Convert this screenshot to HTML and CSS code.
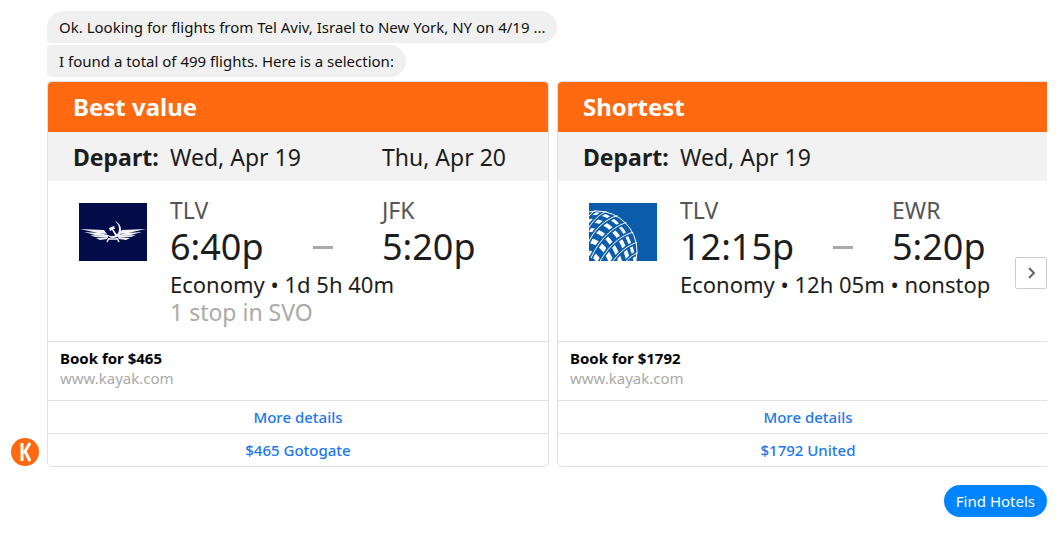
FILE: index.html
```html
<!DOCTYPE html>
<html lang="en">
<head>
    <meta charset="UTF-8">
    <meta name="viewport" content="width=device-width, initial-scale=1.0">
    <title>Kayak Flights Chat</title>
    <link rel="stylesheet" href="styles.css">
</head>
<body>
    <main class="chat">
        <div class="message-group">
            <svg class="avatar" viewBox="0 0 28 28" role="img" aria-label="Kayak">
                <circle cx="14" cy="14" r="14" fill="#ff690f"/>
                <path d="M11 5v18M19 5l-6 10M13.500 12.500L19 23" fill="none" stroke="#fff" stroke-width="3"/>
            </svg>
            <div class="messages">
                <p class="bubble first">Ok. Looking for flights from Tel Aviv, Israel to New York, NY on 4/19 ...</p>
                <p class="bubble">I found a total of 499 flights. Here is a selection:</p>
                <div class="carousel">
                    <div class="cards">
                        <article class="card">
                            <h2 class="card-title">Best value</h2>
                            <div class="depart">
                                <b>Depart:</b>
                                <span>Wed, Apr 19</span>
                                <span>Thu, Apr 20</span>
                            </div>
                            <div class="flight">
                                <svg class="airline" viewBox="0 0 68 58" role="img" aria-label="Aeroflot">
                                    <rect width="68" height="58" fill="#030b49"/>
                                    <g fill="#f2f4fa">
                                        <path d="M1 26l24 1 3 4-9-1zM5 29l15 1 9 2v1l-13-1zM11 32l18 1v1l-13 0zM17 35l12-1-1 2-7 1z"/>
                                        <path d="M67 26l-24 1-3 4 9-1zM63 29l-15 1-9 2v1l13-1zM57 32l-18 1v1l13 0zM51 35l-12-1 1 2 7 1z"/>
                                        <path d="M30 25l5-2 1 3-2 0 5 7-2 1-4-7-2 1z"/>
                                        <path d="M36 18c9 4 8 17-2 17-3 0-5-2-7-4 11 7 18-5 9-13z"/>
                                    </g>
                                    <path d="M28 39l2-4M40 39l-2-4M30 36h8" fill="none" stroke="#f2f4fa" stroke-width="1.500"/>
                                </svg>
                                <div class="details">
                                    <div class="airport">TLV</div>
                                    <div class="airport">JFK</div>
                                    <div class="time"><span>6:40p</span><i class="dash"></i></div>
                                    <div class="time">5:20p</div>
                                    <div class="info">Economy • 1d 5h 40m</div>
                                    <div class="stops">1 stop in SVO</div>
                                </div>
                            </div>
                            <div class="book">
                                <h3>Book for $465</h3>
                                <p>www.kayak.com</p>
                            </div>
                            <a class="action" href="#">More details</a>
                            <a class="action" href="#">$465 Gotogate</a>
                        </article>

                        <article class="card">
                            <h2 class="card-title">Shortest</h2>
                            <div class="depart">
                                <b>Depart:</b>
                                <span>Wed, Apr 19</span>
                            </div>
                            <div class="flight">
                                <svg class="airline" viewBox="0 0 68 58" role="img" aria-label="United">
                                    <defs>
                                        <clipPath id="globe"><circle cx="8" cy="48" r="41"/></clipPath>
                                        <path id="meridians" d="M-4 19C-1 13 4 8 10 5M-3 30C2 19 10 11 20 7M-2 43C4 27 16 16 30 12M2 55C10 37 24 23 39 19M9 62C19 43 32 32 45 29M21 62C30 49 39 42 49 39M34 62C40 54 45 51 51 49"/>
                                    </defs>
                                    <rect width="68" height="58" fill="#0b5cab"/>
                                    <g clip-path="url(#globe)" fill="none" stroke="#fff">
                                        <path stroke-width="3" d="M0 11C20 8 39 23 46 58"/>
                                        <path stroke-width="4" d="M0 18C16 16 35 31 40 62M0 27C13 26 27 41 32 62"/>
                                        <path stroke-width="5" d="M0 38C9 37 20 49 23 62M0 50C5 51 9 56 12 62"/>
                                        <use href="#meridians" stroke="#0b5cab" stroke-width="4"/>
                                        <use href="#meridians" stroke-width="1"/>
                                        <circle cx="8" cy="48" r="40"/>
                                    </g>
                                </svg>
                                <div class="details">
                                    <div class="airport">TLV</div>
                                    <div class="airport">EWR</div>
                                    <div class="time"><span>12:15p</span><i class="dash"></i></div>
                                    <div class="time">5:20p</div>
                                    <div class="info">Economy • 12h 05m • nonstop</div>
                                </div>
                            </div>
                            <div class="book">
                                <h3>Book for $1792</h3>
                                <p>www.kayak.com</p>
                            </div>
                            <a class="action" href="#">More details</a>
                            <a class="action" href="#">$1792 United</a>
                        </article>
                    </div>
                    <button class="next" type="button" aria-label="Next">
                        <svg viewBox="0 0 10 14"><path d="M3 2l5 5-5 5" fill="none" stroke="#64646e" stroke-width="2"/></svg>
                    </button>
                </div>
            </div>
        </div>
        <button class="quick-reply" type="button">Find Hotels</button>
    </main>
</body>
</html>
```
FILE: styles.css
```css
* {
    box-sizing: border-box;
}
body {
    background: #fff;
    color: #1d1d1d;
    font-family: "Noto Sans", "Segoe UI", sans-serif;
    font-size: 15px;
    line-height: 20px;
    margin: 0;
}
h2, h3, p {
    margin: 0;
}
.chat {
    display: flex;
    flex-direction: column;
    padding: 11px 17px 16px 11px;
}
.message-group {
    display: flex;
    align-items: flex-end;
    gap: 8px;
}
.avatar {
    width: 28px;
    height: 28px;
    flex: none;
    margin-bottom: 1px;
}
.messages {
    flex: 1;
    min-width: 0;
    display: flex;
    flex-direction: column;
    align-items: flex-start;
    gap: 2px;
}
.bubble {
    background: #f1f0f0;
    border-radius: 4px 16px 16px 4px;
    color: #111;
    padding: 6px 12px;
}
.bubble.first {
    border-top-left-radius: 16px;
}

/* Flight cards */
.carousel {
    position: relative;
    width: 100%;
    margin-top: 2px;
}
.cards {
    display: flex;
    gap: 8px;
    overflow: hidden;
}
.card {
    flex: 0 0 502px;
    display: flex;
    flex-direction: column;
    border: 1px solid #e1e1e1;
    border-radius: 5px;
    overflow: hidden;
}
.card-title {
    background: #ff690f;
    color: #fff;
    font-size: 24px;
    line-height: 50px;
    padding-left: 25px;
}
.depart {
    display: grid;
    grid-template-columns: 97px 212px 1fr;
    background: #f2f2f2;
    font-size: 23px;
    line-height: 50px;
    height: 49px;
    padding-left: 25px;
}
.flight {
    flex: 1;
    display: flex;
    align-items: flex-start;
    gap: 23px;
    padding: 15px 0 15px 31px;
}
.airline {
    width: 68px;
    height: 58px;
    flex: none;
    margin-top: 7px;
}
.details {
    flex: 1;
    display: grid;
    grid-template-columns: 212px 1fr;
    font-size: 23px;
    line-height: 28px;
}
.airport {
    color: #555;
}
.time {
    display: flex;
    font-size: 36px;
    line-height: 46px;
}
.dash {
    width: 20px;
    height: 3px;
    margin: auto;
    background: #aaa;
}
.info {
    grid-column: 1 / -1;
    font-size: 22px;
}
.stops {
    color: #aaa;
}
.book {
    border-top: 1px solid #e1e1e1;
    padding: 6px 12px 12px;
}
.book h3 {
    color: #000;
    font-size: 15px;
}
.book p {
    color: #aaa;
}
.action {
    border-top: 1px solid #e1e1e1;
    color: #2077ee;
    font-weight: 500;
    line-height: 32px;
    text-align: center;
    text-decoration: none;
}
.next {
    position: absolute;
    right: 0;
    top: 176px;
    display: flex;
    align-items: center;
    justify-content: center;
    width: 32px;
    height: 32px;
    padding: 0;
    background: #fff;
    border: 1px solid #ccc;
    border-radius: 2px;
}
.next svg {
    width: 10px;
    height: 14px;
}
.quick-reply {
    align-self: flex-end;
    margin-top: 18px;
    padding: 6px 12px;
    background: #0084ff;
    border: none;
    border-radius: 16px;
    color: #fff;
    font-family: inherit;
    font-size: 15px;
    line-height: 20px;
}
```
